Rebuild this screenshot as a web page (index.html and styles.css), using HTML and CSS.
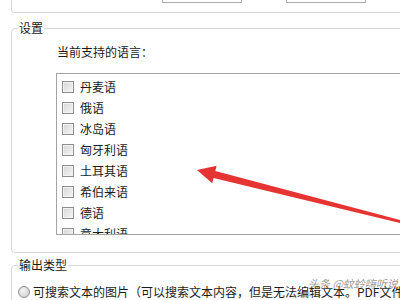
FILE: index.html
```html
<!DOCTYPE html>
<html lang="zh-CN">
<head>
  <meta charset="UTF-8" />
  <title>设置</title>
  <link rel="stylesheet" href="styles.css">
</head>
<body>

  <div class="top">
    <span class="field"></span>
    <span class="field"></span>
  </div>

  <fieldset class="group settings">
    <legend>设置</legend>
    <div class="langs">
      <p class="caption">当前支持的语言：</p>
      <ul class="list">
        <li><span class="check"></span>丹麦语</li>
        <li><span class="check"></span>俄语</li>
        <li><span class="check"></span>冰岛语</li>
        <li><span class="check"></span>匈牙利语</li>
        <li><span class="check"></span>土耳其语</li>
        <li><span class="check"></span>希伯来语</li>
        <li><span class="check"></span>德语</li>
        <li><span class="check"></span>意大利语</li>
      </ul>
    </div>
  </fieldset>

  <fieldset class="group output">
    <legend>输出类型</legend>
    <label class="option"><span class="radio"></span>可搜索文本的图片（可以搜索文本内容，但是无法编辑文本。PDF文件较大）</label>
  </fieldset>

  <!-- 红色箭头 -->
  <svg class="arrow" width="400" height="300" viewBox="0 0 400 300">
    <polygon points="197,170 216.6,165.8 215.3,171.1 402.2,220.6 401.8,223.4 213.5,177.9 212.2,183.2" fill="#e53431"/>
  </svg>

  <span class="mark">头条 @蚊蛉嗨听说</span>

</body>
</html>
```

FILE: styles.css
```css
body {
  margin: 0;
  height: 300px;
  overflow: hidden;
  position: relative;
  background: #fff;
  color: #1b1b1b;
  font-family: "Noto Sans CJK SC", "Liberation Sans", sans-serif;
  font-size: 12px;
}

.top {
  display: flex;
  gap: 44px;
  height: 12px;
  margin: 0 -20px 0 11px;
  padding-left: 150px;
  border: 1px solid #d8d8d8;
  border-top: none;
  border-radius: 0 0 4px 4px;
}

.field {
  width: 78px;
  height: 2px;
  border: 1px solid #abadb3;
  border-top: none;
}

.group {
  margin: 7px -20px 0 11px;
  padding: 0 0 17px 6px;
  border: 1px solid #d8d8d8;
  border-radius: 4px;
}

.group legend {
  padding: 0 1px;
  line-height: 16px;
}

.output {
  margin-top: 4px;
}

.langs {
  padding-left: 38px;
}

.caption {
  margin: 8px 0 13px;
  padding-left: 1px;
  line-height: 16px;
}

.list {
  list-style: none;
  margin: 0;
  padding: 2px 0 0 5px;
  height: 158px;
  overflow: hidden;
  border: 1px solid #a3a3a3;
}

.list li {
  display: flex;
  align-items: center;
  gap: 6px;
  height: 21px;
}

.check {
  width: 10px;
  height: 10px;
  border: 1px solid #8f8f8f;
  background: linear-gradient(135deg, #d6d6d6, #f6f6f6);
  box-shadow: inset 0 0 0 1px #f2f2f2;
}

.option {
  display: flex;
  align-items: center;
  gap: 3px;
  margin-top: 11px;
  line-height: 16px;
  white-space: nowrap;
}

.radio {
  width: 10px;
  height: 10px;
  border: 1px solid #8e8f8f;
  border-radius: 50%;
  background: radial-gradient(circle at 40% 40%, #f4f4f4, #c9c9c9);
}

.arrow {
  position: absolute;
  left: 0;
  top: 0;
}

.mark {
  position: absolute;
  left: 308px;
  top: 275px;
  color: rgba(120, 120, 120, 0.75);
  font-size: 11px;
  font-style: italic;
}
```
